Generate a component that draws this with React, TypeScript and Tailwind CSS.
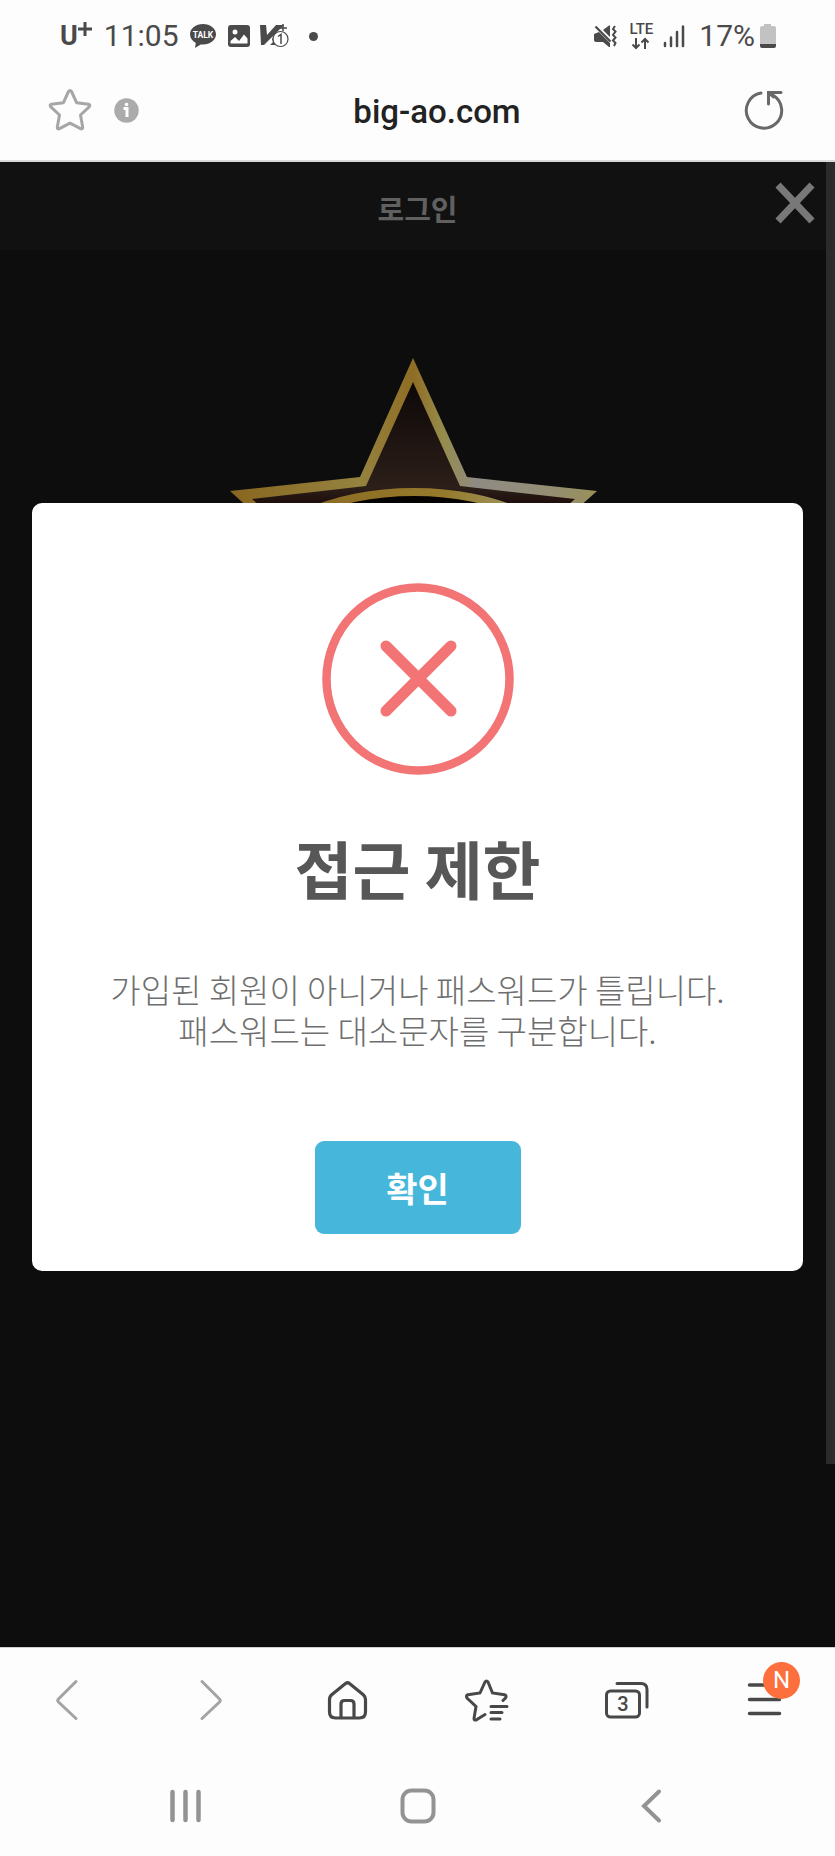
import type { ReactNode } from 'react';

const KR_FONT = "font-['Noto_Sans_CJK_KR',sans-serif]";

function StatusBar() {
  return (
    <div className="flex h-[72px] items-center justify-between pl-[60px] pr-[58px] text-[#4a4a4a]">
      <div className="flex items-center">
        <span className="flex items-start text-[27px] font-bold leading-8">
          U
          <svg width="14" height="14" viewBox="0 0 14 14" className="mt-0.5" aria-hidden="true">
            <path d="M7 0v14M0 7h14" stroke="currentColor" strokeWidth="3" />
          </svg>
        </span>
        <span className="ml-3 text-[30px] leading-8">11:05</span>
        {/* Messenger */}
        <svg width="28" height="26" viewBox="0 0 28 26" className="ml-2.5" aria-hidden="true">
          <path
            d="M14 1C6.800 1 1 5.500 1 11.300c0 3.700 2.300 6.800 5.800 8.600L6 25l5.700-3.600c.7.100 1.500.2 2.300.2 7.200 0 13-4.600 13-10.300S21.200 1 14 1z"
            fill="currentColor"
          />
          <text x="14" y="14.500" fill="#fff" fontSize="8.500" fontWeight="700" textAnchor="middle">
            TALK
          </text>
        </svg>
        {/* Picture */}
        <svg width="24" height="24" viewBox="0 0 24 24" className="ml-2.5" aria-hidden="true">
          <rect x="1" y="1" width="22" height="22" rx="3" fill="currentColor" />
          <circle cx="8" cy="8" r="2.500" fill="#fff" />
          <path d="M3.500 19.500V17l4.500-4 4 4 5-6.500 3.500 4v5z" fill="#fff" />
        </svg>
        {/* Vaccine app */}
        <svg width="30" height="26" viewBox="0 0 30 26" className="ml-2" aria-hidden="true">
          <path d="M1 2h6l1 10L17 2h8L5 22H2z" fill="currentColor" />
          <path d="M11 22l3-3-1-3 6-7v13z" fill="currentColor" />
          <path d="M24 1v7M20 5h8" stroke="currentColor" strokeWidth="1.500" />
          <circle cx="21.500" cy="16" r="7.500" fill="#fff" stroke="currentColor" strokeWidth="1.200" />
          <path d="M19 13.500l3-2v9.500" fill="none" stroke="currentColor" strokeWidth="1.500" />
        </svg>
        <span className="ml-5 size-[9px] rounded-full bg-current" />
      </div>

      <div className="flex items-center">
        {/* Muted, vibrate */}
        <svg width="24" height="24" viewBox="0 0 24 24" aria-hidden="true">
          <path d="M1 10l5-2L17 19v4h-1l-6-5H3c-1 0-2-.7-2-2zM10 6l6-4.500h1V13z" fill="currentColor" />
          <path d="M2.500 2.500l15 15" stroke="currentColor" strokeWidth="2.200" />
          <path
            d="M22 2l-2 3 2.500 2.500L20 11l2.500 2.500-2.500 3 2.500 2.500-1.500 3"
            fill="none"
            stroke="currentColor"
            strokeWidth="2"
          />
        </svg>
        <span className="ml-3 flex flex-col items-center">
          <span className="text-[15px] font-medium leading-3">LTE</span>
          <svg width="20" height="13" viewBox="0 0 20 13" className="mt-0.5" aria-hidden="true">
            <path
              d="M5 1v10M1.500 7.500L5 11l3.500-3.500M14 12V2M10.500 5.500L14 2l3.500 3.500"
              fill="none"
              stroke="currentColor"
              strokeWidth="2"
            />
          </svg>
        </span>
        <svg width="22" height="24" viewBox="0 0 22 24" className="ml-2.5" aria-hidden="true">
          <path
            d="M2 19v3M8 13.500V22M14 8v14M20 2.500V22"
            stroke="currentColor"
            strokeWidth="2.500"
            strokeLinecap="round"
          />
        </svg>
        <span className="ml-3.5 text-[30px] leading-8">17%</span>
        <svg width="18" height="26" viewBox="0 0 18 26" className="ml-1" aria-hidden="true">
          <path d="M5 1h7v2h3q2 0 2 2v17H1V5q0-2 2-2h2z" fill="#c2c2c2" />
          <path d="M1 21h16v2q0 2-2 2H3q-2 0-2-2z" fill="currentColor" />
        </svg>
      </div>
    </div>
  );
}

function AddressBar() {
  return (
    <div className="flex h-[88px] items-start px-12 pt-4">
      <div className="flex items-center gap-[22px]">
        <button type="button" aria-label="즐겨찾기">
          <svg width="44" height="44" viewBox="0 0 44 44" fill="none" stroke="#a6a6a6" strokeWidth="3">
            <path
              d="M20.500 3.500q1.500-2 3 0l5.200 11.300 11.800 1.500q2.300.6.700 2.500L32.500 27l2.200 12.200q0 2.300-2.200 1.500L22 35.200l-10.500 5.500q-2.200.8-2.200-1.500L11.500 27 2.800 18.800q-1.600-1.900.7-2.500l11.800-1.500z"
              strokeLinejoin="round"
            />
          </svg>
        </button>
        <button type="button" aria-label="사이트 정보">
          <svg width="25" height="25" viewBox="0 0 25 25">
            <circle cx="12.500" cy="12.500" r="12.200" fill="#ababab" />
            <circle cx="12.500" cy="6.500" r="1.800" fill="#fff" />
            <path d="M9.500 10.500h3.500v8.500" fill="none" stroke="#fff" strokeWidth="3" />
          </svg>
        </button>
      </div>
      <span className="flex-1 pr-2 pt-1 text-center text-[33px] font-medium leading-10 text-[#222]">
        big-ao.com
      </span>
      <button type="button" aria-label="새로고침">
        <svg width="44" height="44" viewBox="0 0 44 44" fill="none" stroke="#686868" strokeWidth="3">
          <path d="M18 5A17.700 17.700 0 1 0 30.500 7.500" strokeLinecap="round" />
          <path d="M25.500 16V4.500H38" strokeLinecap="round" />
          <path d="M26.500 5.500l5 4" />
        </svg>
      </button>
    </div>
  );
}

function StarLogo() {
  return (
    <svg width="368" height="350" viewBox="0 0 368 350" className="shrink-0" aria-hidden="true">
      <defs>
        <linearGradient id="gold" x1="0" y1="0" x2="1" y2="0">
          <stop offset="0" stopColor="#88651f" />
          <stop offset="0.350" stopColor="#958340" />
          <stop offset="0.500" stopColor="#8f6d25" />
          <stop offset="0.580" stopColor="#958c4b" />
          <stop offset="0.670" stopColor="#8f8b84" />
          <stop offset="0.850" stopColor="#938d76" />
          <stop offset="1" stopColor="#99905a" />
        </linearGradient>
        <linearGradient id="ring" x1="0" y1="0" x2="1" y2="0">
          <stop offset="0" stopColor="#88651f" />
          <stop offset="0.600" stopColor="#957a2c" />
          <stop offset="0.850" stopColor="#a09a68" />
        </linearGradient>
        <linearGradient id="core" x1="0" y1="0" x2="0" y2="1">
          <stop offset="0" stopColor="#0d0807" />
          <stop offset="0.350" stopColor="#2c1e19" />
          <stop offset="0.450" stopColor="#100000" />
        </linearGradient>
      </defs>
      <path
        d="M183 0L237 119 367 133 270 220 300 348 183 285 66 348 96 220 0 133 130 119z"
        fill="url(#gold)"
      />
      <path
        d="M183 24L230 128 345 141 258 216 284 326 183 272 82 326 108 216 22 141 136 128z"
        fill="url(#core)"
      />
      <ellipse cx="184" cy="216" rx="160" ry="82" fill="#050202" stroke="url(#ring)" strokeWidth="8" />
    </svg>
  );
}

function AlertDialog() {
  return (
    <div
      role="alertdialog"
      aria-modal="true"
      aria-labelledby="alert-title"
      aria-describedby="alert-text"
      className="absolute inset-x-8 top-[341px] flex flex-col items-center rounded-[10px] bg-white px-8 pb-[37px] pt-20"
    >
      <svg width="192" height="192" viewBox="0 0 192 192" fill="none" stroke="#f27474" aria-hidden="true">
        <circle cx="96" cy="96" r="91.500" strokeWidth="8.500" />
        <path d="M64 63l65 65M129 63l-65 65" strokeWidth="11" strokeLinecap="round" />
      </svg>
      <h2 id="alert-title" className="mt-14 text-[63px] font-bold leading-[72px] text-[#575757]">
        접근 제한
      </h2>
      <p id="alert-text" className="mt-[66px] text-center text-[33px] font-light leading-[41px] text-[#6e6e6e]">
        가입된 회원이 아니거나 패스워드가 틀립니다.
        <br />
        패스워드는 대소문자를 구분합니다.
      </p>
      <button
        type="button"
        className="mt-[90px] h-[93px] w-[206px] rounded-[9px] bg-[#46b7db] text-[34px] font-bold text-white"
      >
        확인
      </button>
    </div>
  );
}

function LoginPage() {
  return (
    <main className={`relative flex-1 bg-[#0d0d0d] ${KR_FONT}`}>
      <header className="relative flex h-[88px] items-center justify-center bg-[#111] pt-1.5">
        <h1 className="text-[29px] font-bold text-[#606060]">로그인</h1>
        <button type="button" aria-label="닫기" className="absolute right-5 top-5">
          <svg width="40" height="42" viewBox="0 0 40 42" stroke="#787878" strokeWidth="7">
            <path d="M3 3l34 36M37 3L3 39" />
          </svg>
        </button>
      </header>
      <div className="flex justify-center pr-2 pt-[108px]">
        <StarLogo />
      </div>
      {/* Scrollbar thumb */}
      <div className="absolute right-0 top-0 h-[1302px] w-[9px] bg-[#2b2b2b]" />
      <AlertDialog />
    </main>
  );
}

function ToolButton({ label, children }: { label: string; children: ReactNode }) {
  return (
    <button type="button" aria-label={label} className="relative flex size-11 items-center justify-center">
      {children}
    </button>
  );
}

function BrowserToolbar() {
  return (
    <nav className="flex h-[103px] items-center justify-between px-[47px] text-[#484848]">
      <ToolButton label="뒤로">
        <svg width="44" height="44" viewBox="0 0 44 44" fill="none" stroke="#a3a3a3" strokeWidth="3" strokeLinecap="round">
          <path d="M29 3.500L11.500 21q-1.500 1.500 0 3L29 40.500" />
        </svg>
      </ToolButton>
      <ToolButton label="앞으로">
        <svg width="44" height="44" viewBox="0 0 44 44" fill="none" stroke="#a3a3a3" strokeWidth="3" strokeLinecap="round">
          <path d="M16 3.500L33.500 21q1.500 1.500 0 3L16 40.500" />
        </svg>
      </ToolButton>
      <ToolButton label="홈">
        <svg width="44" height="44" viewBox="0 0 44 44" fill="none" stroke="currentColor" strokeWidth="3.200">
          <path d="M19.500 5.500q2-1.500 4 0L37 16.500q2.500 2 2.500 5V34q0 6-6 6h-24q-6 0-6-6V21.500q0-3 2.500-5z" />
          <path d="M15 40V26q0-3.500 3.500-3.500h6Q28 22.500 28 26v14" />
        </svg>
      </ToolButton>
      <ToolButton label="북마크">
        <svg width="44" height="44" viewBox="0 0 44 44" fill="none" stroke="currentColor" strokeWidth="3" strokeLinecap="round">
          <path d="M38 22.500l2.500-2.500q1.500-2.500-1-3.200L27.500 15 23 4q-1.500-2-3 0l-5 11-12 1.800q-2.500.8-1 3.200l9 8.500L9 40.500q0 2 2 1.500l9-5.500" />
          <path d="M26 28.500h16M26 34.500h11M26 41h9" />
        </svg>
      </ToolButton>
      <ToolButton label="탭">
        <svg width="44" height="44" viewBox="0 0 44 44" fill="none" stroke="currentColor" strokeWidth="3">
          <rect x="1.500" y="13" width="33" height="26" rx="4" />
          <path d="M12 5.500h24q6 0 6 6V29" strokeLinecap="round" />
          <text x="18" y="33" fill="currentColor" stroke="none" fontSize="20" fontWeight="500" textAnchor="middle">
            3
          </text>
        </svg>
      </ToolButton>
      <ToolButton label="메뉴">
        <svg width="44" height="44" viewBox="0 0 44 44" fill="none" stroke="currentColor" strokeWidth="3.500" strokeLinecap="round">
          <path d="M5.500 7h30M5.500 21.500h30M5.500 35.500h30" />
        </svg>
        <span className="absolute -right-3 -top-4 flex size-[37px] items-center justify-center rounded-full bg-[#fd703e] text-2xl text-white">
          N
        </span>
      </ToolButton>
    </nav>
  );
}

function SystemNav() {
  return (
    <nav className="flex h-[105px] items-start justify-between px-[163px] pt-[37px]">
      <button type="button" aria-label="최근 앱">
        <svg width="44" height="36" viewBox="0 0 44 36" stroke="#939393" strokeWidth="4.500" strokeLinecap="round">
          <path d="M9.500 4v28M22.500 4v28M35.500 4v28" />
        </svg>
      </button>
      <button type="button" aria-label="홈 화면">
        <svg width="36" height="36" viewBox="0 0 36 36" fill="none" stroke="#939393" strokeWidth="4">
          <rect x="2.500" y="2.500" width="31" height="31" rx="9" />
        </svg>
      </button>
      <button type="button" aria-label="이전">
        <svg width="44" height="36" viewBox="0 0 44 36" fill="none" stroke="#939393" strokeWidth="4" strokeLinecap="round">
          <path d="M31 3.500L16 18l15 14.500" />
        </svg>
      </button>
    </nav>
  );
}

export default function App() {
  return (
    <div className="flex min-h-screen flex-col bg-[#fdfdfd] font-['Roboto',sans-serif]">
      <div className="border-b-2 border-[#d9d9d9]">
        <StatusBar />
        <AddressBar />
      </div>
      <LoginPage />
      <div className="border-t border-[#d0d0d0]">
        <BrowserToolbar />
        <SystemNav />
      </div>
    </div>
  );
}
